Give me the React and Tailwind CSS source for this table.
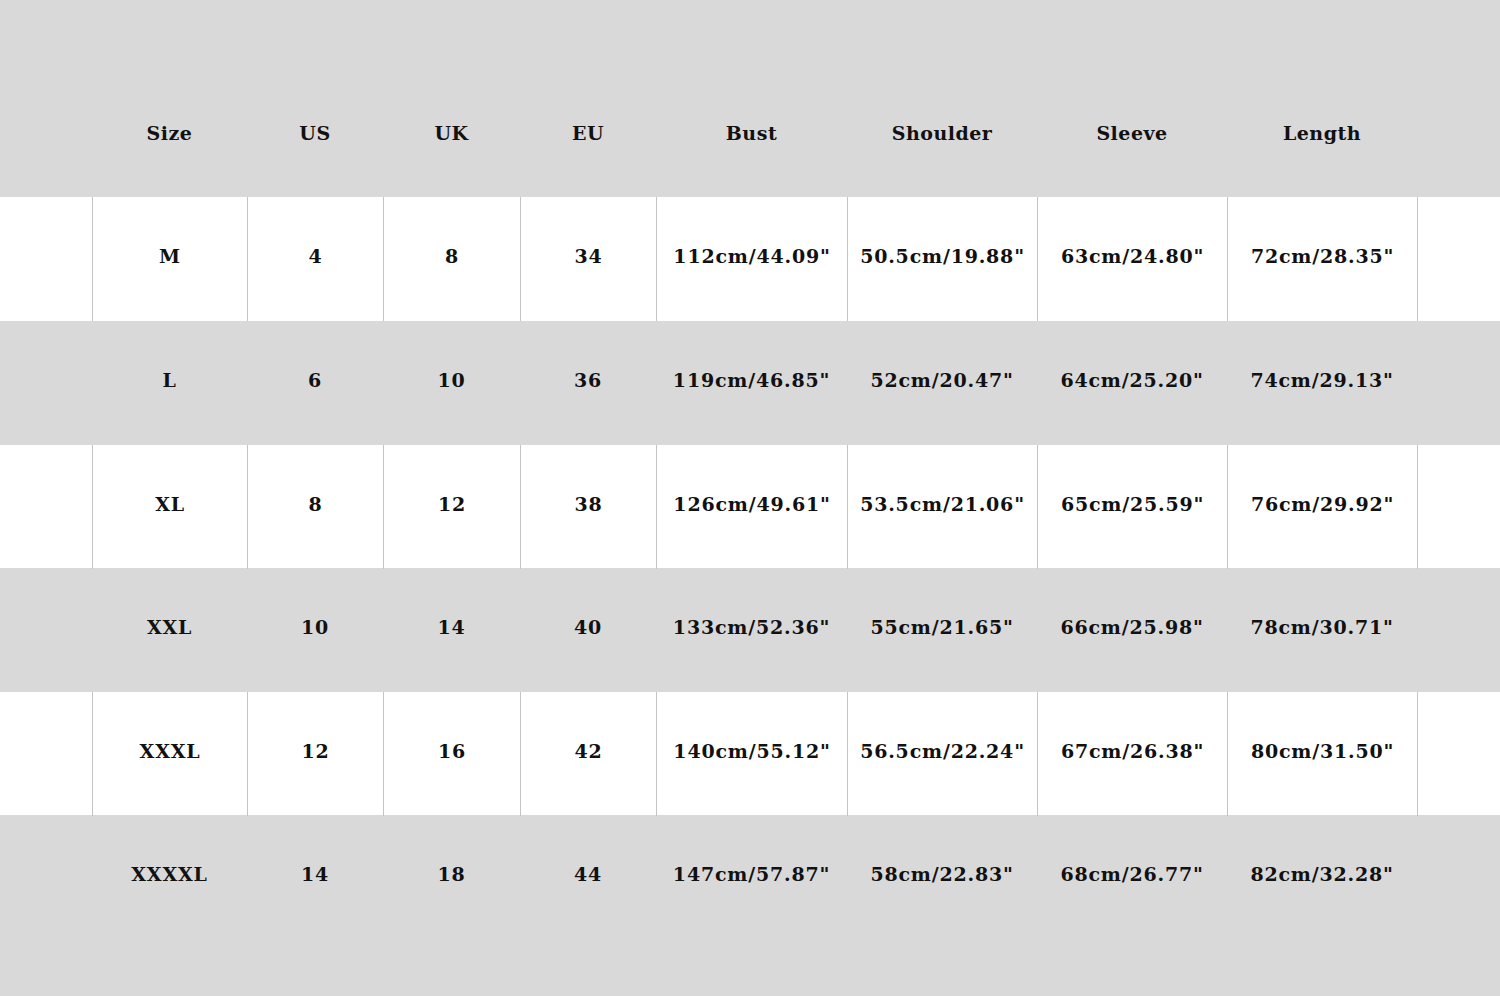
const columns = ["Size", "US", "UK", "EU", "Bust", "Shoulder", "Sleeve", "Length"];

const rows = [
  ["M", "4", "8", "34", "112cm/44.09\"", "50.5cm/19.88\"", "63cm/24.80\"", "72cm/28.35\""],
  ["L", "6", "10", "36", "119cm/46.85\"", "52cm/20.47\"", "64cm/25.20\"", "74cm/29.13\""],
  ["XL", "8", "12", "38", "126cm/49.61\"", "53.5cm/21.06\"", "65cm/25.59\"", "76cm/29.92\""],
  ["XXL", "10", "14", "40", "133cm/52.36\"", "55cm/21.65\"", "66cm/25.98\"", "78cm/30.71\""],
  ["XXXL", "12", "16", "42", "140cm/55.12\"", "56.5cm/22.24\"", "67cm/26.38\"", "80cm/31.50\""],
  ["XXXXL", "14", "18", "44", "147cm/57.87\"", "58cm/22.83\"", "68cm/26.77\"", "82cm/32.28\""],
];

const heights = ["h-[124px]", "h-[124px]", "h-[123px]", "h-[124px]", "h-[123px]", "h-[181px]"];

const grid = "grid grid-cols-[92px_155px_136px_137px_136px_191px_190px_190px_190px_83px]";
const font = { fontFamily: '"DejaVu Serif", "Liberation Serif", serif' };

function Row({ cells, white, height }) {
  return (
    <div className={`${grid} ${white ? "bg-white" : "bg-[#d9d9d9]"} ${height}`}>
      <div />
      {cells.map((c, i) => (
        <div
          key={i}
          className={`flex h-[124px] items-center justify-center pb-[5px] text-[19px] font-bold tracking-[0.8px] text-[#111] ${white ? "border-l border-[#c4c4c4]" : ""}`}
        >
          {c}
        </div>
      ))}
      <div className={white ? "border-l border-[#c4c4c4]" : ""} />
    </div>
  );
}

export default function App() {
  return (
    <div className="h-[996px] w-[1500px] overflow-hidden bg-[#d9d9d9]" style={font}>
      <div className={`${grid} h-[197px] bg-[#d9d9d9]`}>
        <div />
        {columns.map((c) => (
          <div key={c} className="flex items-start justify-center pt-[119px] text-[19px] font-bold tracking-[0.5px] text-[#111]">
            {c}
          </div>
        ))}
        <div />
      </div>
      {rows.map((r, i) => (
        <Row key={r[0]} cells={r} white={i % 2 === 0} height={heights[i]} />
      ))}
    </div>
  );
}
